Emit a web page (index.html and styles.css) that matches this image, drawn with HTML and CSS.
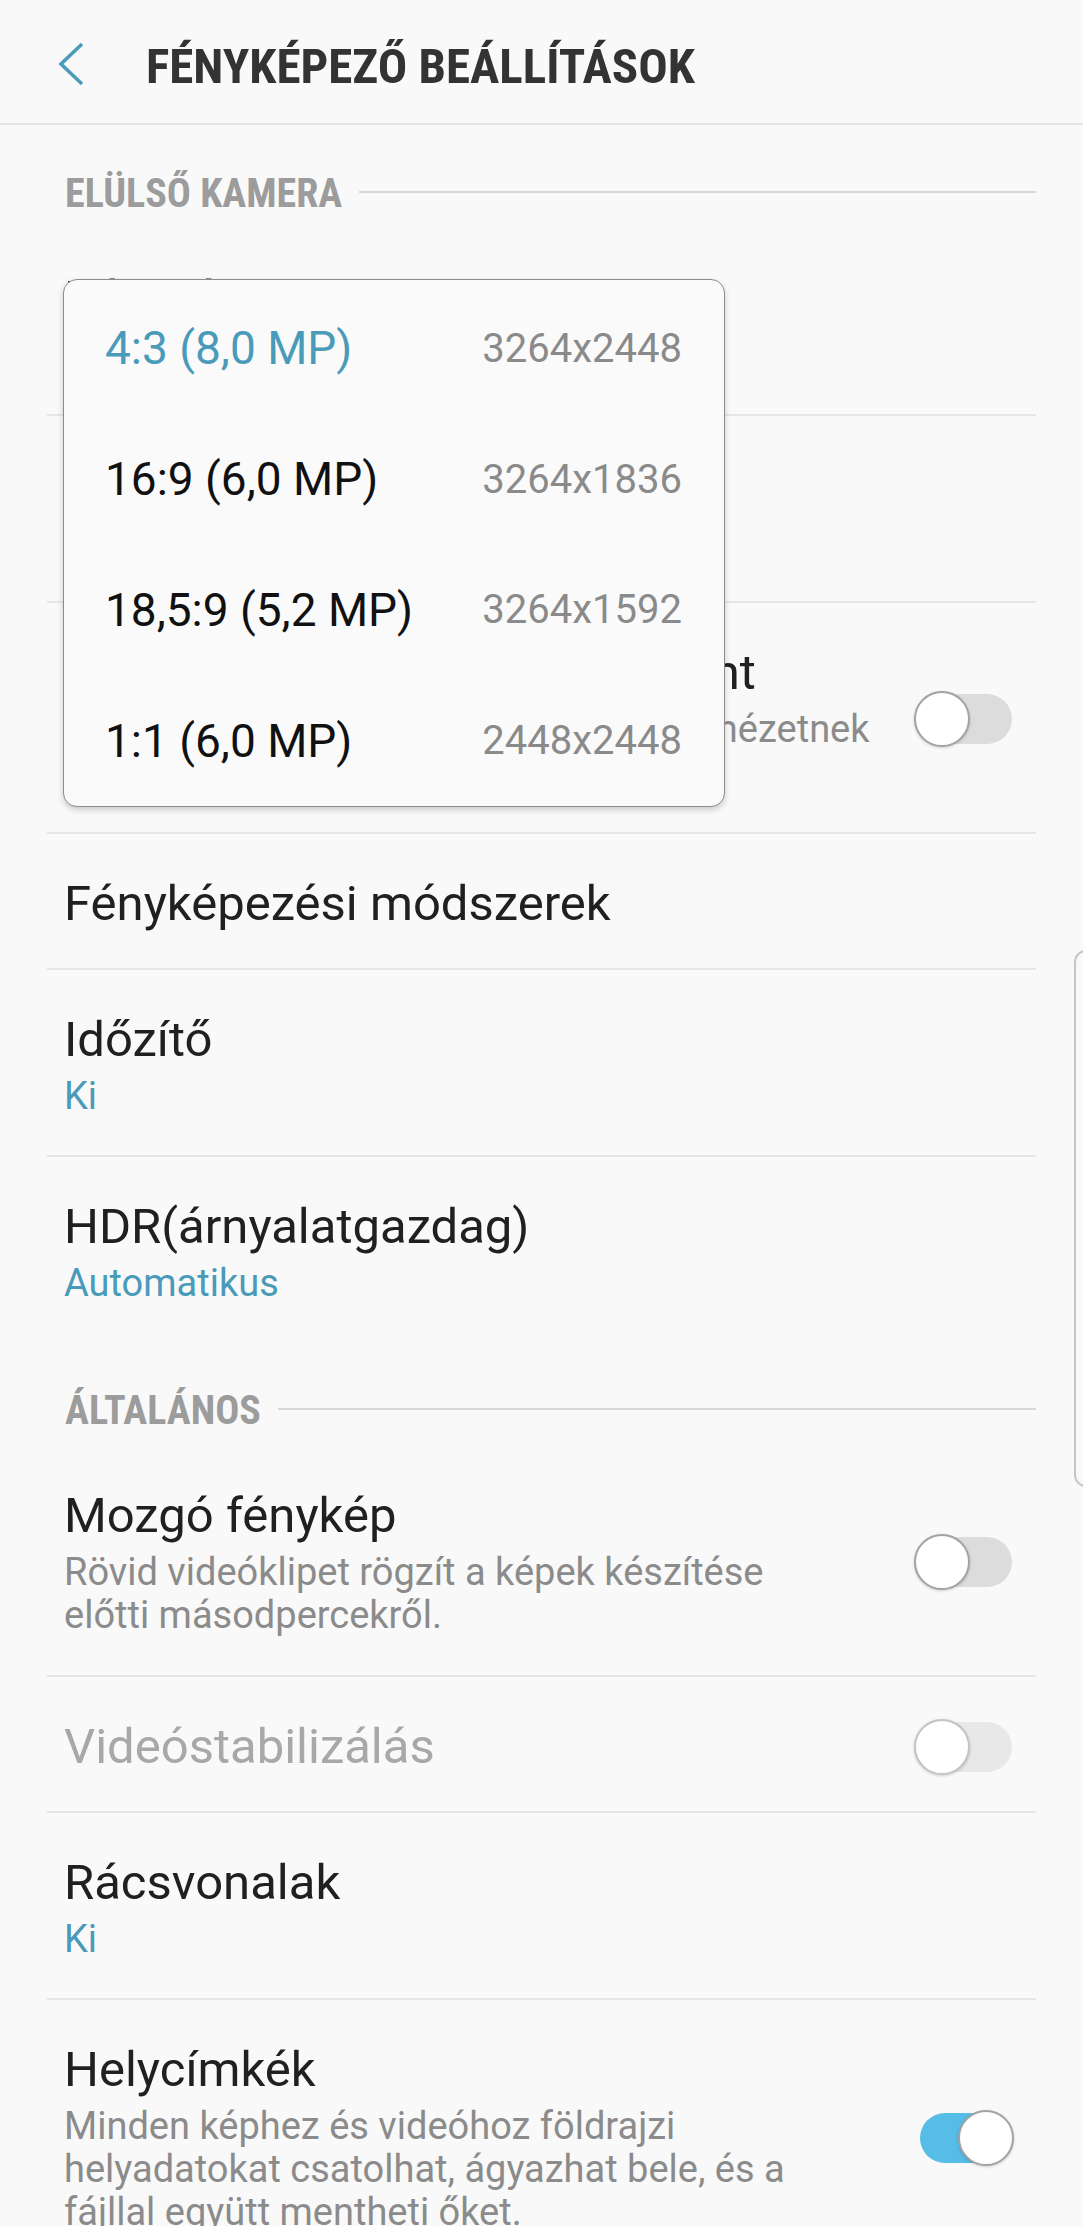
FILE: index.html
```html
<!DOCTYPE html>
<html lang="hu">
<head>
    <meta charset="UTF-8">
    <meta name="viewport" content="width=device-width, initial-scale=1.0">
    <title>Fényképező beállítások</title>
    <link rel="stylesheet" href="styles.css">
</head>
<body>
    <header class="appbar">
        <svg class="back" viewBox="0 0 30 46">
            <polyline points="25,3 4,23 25,43"></polyline>
        </svg>
        <h1 class="appbar-title">FÉNYKÉPEZŐ BEÁLLÍTÁSOK</h1>
    </header>

    <main class="settings">
        <div class="section-head"><span class="section-label">ELÜLSŐ KAMERA</span></div>
        <div class="group">
            <div class="row">
                <div class="row-text">
                    <div class="row-title">Képméret</div>
                    <div class="row-value">4:3 (8,0 MP)</div>
                </div>
            </div>
            <div class="row">
                <div class="row-text">
                    <div class="row-title">Videóméret</div>
                    <div class="row-value">FHD 1920x1080 (16:9)</div>
                </div>
            </div>
            <div class="row">
                <div class="row-text">
                    <div class="row-title">Képek mentése előnézet szerint</div>
                    <div class="row-sub">Önarcképek mentése úgy, ahogy az előnézetnek<br>megfelelően látszanak.</div>
                </div>
                <div class="switch"></div>
            </div>
            <div class="row single">
                <div class="row-text">
                    <div class="row-title">Fényképezési módszerek</div>
                </div>
            </div>
            <div class="row">
                <div class="row-text">
                    <div class="row-title">Időzítő</div>
                    <div class="row-value">Ki</div>
                </div>
            </div>
            <div class="row">
                <div class="row-text">
                    <div class="row-title">HDR(árnyalatgazdag)</div>
                    <div class="row-value">Automatikus</div>
                </div>
            </div>
        </div>

        <div class="section-head"><span class="section-label">ÁLTALÁNOS</span></div>
        <div class="group">
            <div class="row">
                <div class="row-text">
                    <div class="row-title">Mozgó fénykép</div>
                    <div class="row-sub">Rövid videóklipet rögzít a képek készítése<br>előtti másodpercekről.</div>
                </div>
                <div class="switch"></div>
            </div>
            <div class="row single disabled">
                <div class="row-text">
                    <div class="row-title">Videóstabilizálás</div>
                </div>
                <div class="switch"></div>
            </div>
            <div class="row">
                <div class="row-text">
                    <div class="row-title">Rácsvonalak</div>
                    <div class="row-value">Ki</div>
                </div>
            </div>
            <div class="row">
                <div class="row-text">
                    <div class="row-title">Helycímkék</div>
                    <div class="row-sub">Minden képhez és videóhoz földrajzi<br>helyadatokat csatolhat, ágyazhat bele, és a<br>fájllal együtt mentheti őket.</div>
                </div>
                <div class="switch on"></div>
            </div>
        </div>
    </main>

    <div class="popup">
        <div class="popup-item selected"><span>4:3 (8,0 MP)</span><span class="res">3264x2448</span></div>
        <div class="popup-item"><span>16:9 (6,0 MP)</span><span class="res">3264x1836</span></div>
        <div class="popup-item"><span>18,5:9 (5,2 MP)</span><span class="res">3264x1592</span></div>
        <div class="popup-item"><span>1:1 (6,0 MP)</span><span class="res">2448x2448</span></div>
    </div>

    <div class="edge-handle"></div>
</body>
</html>
```

FILE: styles.css
```css
html, body {
    margin: 0;
    height: 2226px;
    overflow: hidden;
    background: #f9f9f9;
}
body {
    font-family: Roboto, "Noto Sans", sans-serif;
    position: relative;
    color: #202020;
}
.appbar {
    height: 123px;
    border-bottom: 2px solid #e4e4e4;
    display: flex;
    align-items: center;
}
.back {
    width: 30px;
    height: 46px;
    margin: 4px 0 0 57px;
}
.back polyline {
    fill: none;
    stroke: #4a9aba;
    stroke-width: 3.5;
}
.appbar-title {
    margin: 10px 0 0 59px;
    font-size: 49px;
    font-weight: 700;
    font-stretch: 87%;
    color: #333;
    white-space: nowrap;
}
.section-head {
    display: flex;
    align-items: center;
    margin: 0 47px;
    padding: 47px 0 13px 18px;
    font-size: 40px;
    line-height: 44px;
    font-weight: 700;
    font-stretch: 87%;
    color: #9c9c9c;
}
.section-head::after {
    content: "";
    flex: 1;
    height: 2px;
    margin: 0 0 4px 17px;
    background: #d8d8d8;
}
.group {
    margin: 0 47px;
}
.row {
    display: flex;
    align-items: center;
    padding: 41px 22px 38px 17px;
}
.row + .row {
    border-top: 2px solid #e6e6e6;
}
.row.single {
    padding-bottom: 35px;
}
.row-text {
    flex: 1;
}
.row-title {
    font-size: 49px;
    line-height: 58px;
    white-space: nowrap;
}
.row-sub,
.row-value {
    margin-top: 6px;
    font-size: 38px;
    line-height: 42px;
    color: #8b8b8b;
}
.row-sub {
    line-height: 43px;
}
.row-value {
    color: #4a9aba;
}
.disabled .row-title {
    color: #a8a8a8;
}
.switch {
    position: relative;
    width: 100px;
    height: 56px;
    flex: none;
}
.switch::before {
    content: "";
    position: absolute;
    left: 6px;
    right: 2px;
    top: 3px;
    bottom: 3px;
    border-radius: 25px;
    background: #dcdcdc;
}
.switch::after {
    content: "";
    position: absolute;
    left: 0;
    top: 0;
    width: 56px;
    height: 56px;
    box-sizing: border-box;
    border-radius: 50%;
    background: #fff;
    border: 2px solid #a3a3a3;
    box-shadow: 0 1px 3px rgba(0, 0, 0, 0.18);
}
.disabled .switch::before {
    background: #e8e8e8;
}
.disabled .switch::after {
    border-color: #c4c4c4;
}
.switch.on::before {
    background: #56bde6;
}
.switch.on::after {
    left: 44px;
}
.popup {
    position: absolute;
    left: 63px;
    top: 279px;
    width: 662px;
    height: 528px;
    box-sizing: border-box;
    padding-top: 3px;
    border: 1px solid #8c8c8c;
    border-radius: 14px;
    background: #fafafa;
    box-shadow: 0 3px 6px rgba(0, 0, 0, 0.18);
    display: flex;
    flex-direction: column;
}
.popup-item {
    flex: 1;
    display: flex;
    align-items: center;
    justify-content: space-between;
    padding: 0 42px 0 41px;
    font-size: 46px;
    color: #111;
}
.popup-item.selected {
    color: #4a9aba;
}
.popup-item .res {
    font-size: 40px;
    color: #8a8a8a;
}
.edge-handle {
    position: absolute;
    left: 1074px;
    top: 950px;
    width: 30px;
    height: 533px;
    border: 2px solid #c6c6c6;
    border-radius: 12px;
}
```
